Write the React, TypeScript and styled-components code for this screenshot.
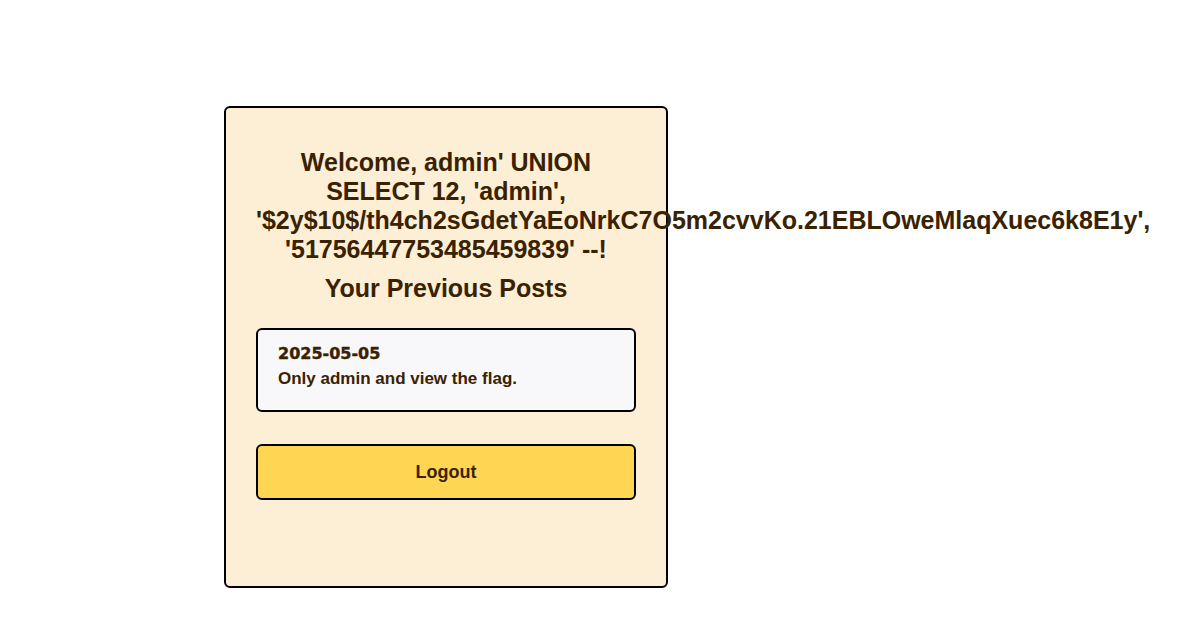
import React from "react";
import styled, { createGlobalStyle } from "styled-components";

const Global = createGlobalStyle`
  html, body { margin: 0; padding: 0; background: #ffffff; }
  body { font-family: "Liberation Sans", Arial, sans-serif; color: #3a2200; }
`;

const Page = styled.div`
  display: flex;
  align-items: flex-start;
  padding: 106px 0 0 224px;
`;

const Card = styled.div`
  box-sizing: border-box;
  width: 444px;
  height: 482px;
  padding: 30px;
  background: #fcefd6;
  border: 2px solid #000;
  border-radius: 6px;
  display: flex;
  flex-direction: column;
`;

const Heading = styled.h2`
  margin: 10px 0 0;
  font-size: 25px;
  line-height: 29px;
  font-weight: bold;
  text-align: center;
  color: #3a2200;
`;

const Posts = styled.div`
  margin-top: 25px;
  display: flex;
  flex-direction: column;
`;

const Post = styled.div`
  box-sizing: border-box;
  background: #f8f8fa;
  border: 2px solid #000;
  border-radius: 6px;
  padding: 14px 20px 21px;
`;

const PostDate = styled.div`
  font-family: "DejaVu Sans", sans-serif;
  font-weight: bold;
  font-size: 16px;
  line-height: 20px;
  margin-bottom: 5px;
  -webkit-text-stroke: 0.4px currentColor;
`;

const PostText = styled.div`
  font-size: 17px;
  font-weight: bold;
  line-height: 20px;
`;

const Button = styled.button`
  margin-top: 32px;
  height: 56px;
  width: 100%;
  box-sizing: border-box;
  background: #ffd653;
  border: 2px solid #000;
  border-radius: 6px;
  font-family: "Liberation Sans", Arial, sans-serif;
  font-size: 18px;
  font-weight: bold;
  color: #3a2200;
  cursor: pointer;
`;

export default function App() {
  return (
    <>
      <Global />
      <Page>
        <Card>
          <Heading>
            Welcome, admin' UNION SELECT 12, 'admin', '$2y$10$/th4ch2sGdetYaEoNrkC7O5m2cvvKo.21EBLOweMlaqXuec6k8E1y', '51756447753485459839' --!
          </Heading>
          <Heading>Your Previous Posts</Heading>
          <Posts>
            <Post>
              <PostDate>2025-05-05</PostDate>
              <PostText>Only admin and view the flag.</PostText>
            </Post>
          </Posts>
          <Button>Logout</Button>
        </Card>
      </Page>
    </>
  );
}
